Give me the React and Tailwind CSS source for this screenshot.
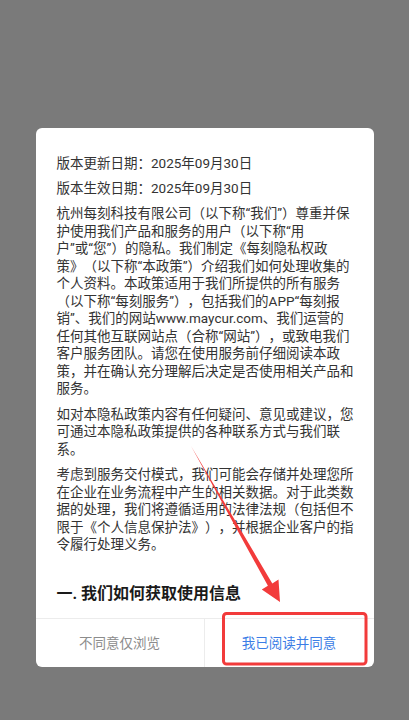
import React from 'react';

const para1 = [
  '杭州每刻科技有限公司（以下称“我们”）尊重并保',
  '护使用我们产品和服务的用户（以下称“用',
  '户”或“您”）的隐私。我们制定《每刻隐私权政',
  '策》（以下称“本政策”）介绍我们如何处理收集的',
  '个人资料。本政策适用于我们所提供的所有服务',
  '（以下称“每刻服务”），包括我们的APP“每刻报',
  '销”、我们的网站www.maycur.com、我们运营的',
  '任何其他互联网站点（合称“网站”），或致电我们',
  '客户服务团队。请您在使用服务前仔细阅读本政',
  '策，并在确认充分理解后决定是否使用相关产品和',
  '服务。',
];

const para2 = [
  '如对本隐私政策内容有任何疑问、意见或建议，您',
  '可通过本隐私政策提供的各种联系方式与我们联',
  '系。',
];

const para3 = [
  '考虑到服务交付模式，我们可能会存储并处理您所',
  '在企业在业务流程中产生的相关数据。对于此类数',
  '据的处理，我们将遵循适用的法律法规（包括但不',
  '限于《个人信息保护法》），并根据企业客户的指',
  '令履行处理义务。',
];

const Para = ({ lines }) => (
  <div className="mb-[8px]">
    {lines.map((l, i) => (
      <div key={i} className="whitespace-nowrap">{l}</div>
    ))}
  </div>
);

const App = () => {
  return (
    <div
      className="relative w-[409px] h-[720px] bg-[#7a7a7a] flex justify-center pt-[128px] overflow-hidden [text-spacing-trim:space-all]"
      style={{ fontFamily: 'Roboto, "Noto Sans CJK SC", sans-serif' }}
    >
      <div className="w-[338px] h-[539px] bg-white rounded-[6px] overflow-hidden flex flex-col">
        {/* scrollable policy text */}
        <div className="h-[490px] overflow-hidden px-[21px] pt-[27px] text-[13.5px] leading-[17.5px] text-[#333]">
          <div className="mb-[7px]">版本更新日期：2025年09月30日</div>
          <div className="mb-[8px]">版本生效日期：2025年09月30日</div>
          <Para lines={para1} />
          <Para lines={para2} />
          <Para lines={para3} />
          <h3 className="mt-[30px] text-[16px] leading-[20px] font-bold text-[#1a1a1a] whitespace-nowrap">
            一. 我们如何获取使用信息
          </h3>
        </div>

        {/* buttons */}
        <div className="flex-1 grid grid-cols-2 border-t border-[#ececec] text-[13.5px]">
          <button className="flex items-center justify-center border-r border-[#ececec] text-[#8c8c8c]">
            不同意仅浏览
          </button>
          <button className="flex items-center justify-center text-[#3b7de6]">
            我已阅读并同意
          </button>
        </div>
      </div>

      {/* red annotation */}
      <svg className="absolute inset-0 pointer-events-none" width="409" height="720" viewBox="0 0 409 720">
        <polygon
          points="191,446 272.3,583.4 278.5,579.6 280,602 261.8,589.6 267.9,585.8"
          fill="#f23b3b"
        />
        <rect x="223.5" y="613.5" width="142.5" height="50.5" rx="3" fill="none" stroke="#f23b3b" strokeWidth="3" />
      </svg>
    </div>
  );
};

export default App;
